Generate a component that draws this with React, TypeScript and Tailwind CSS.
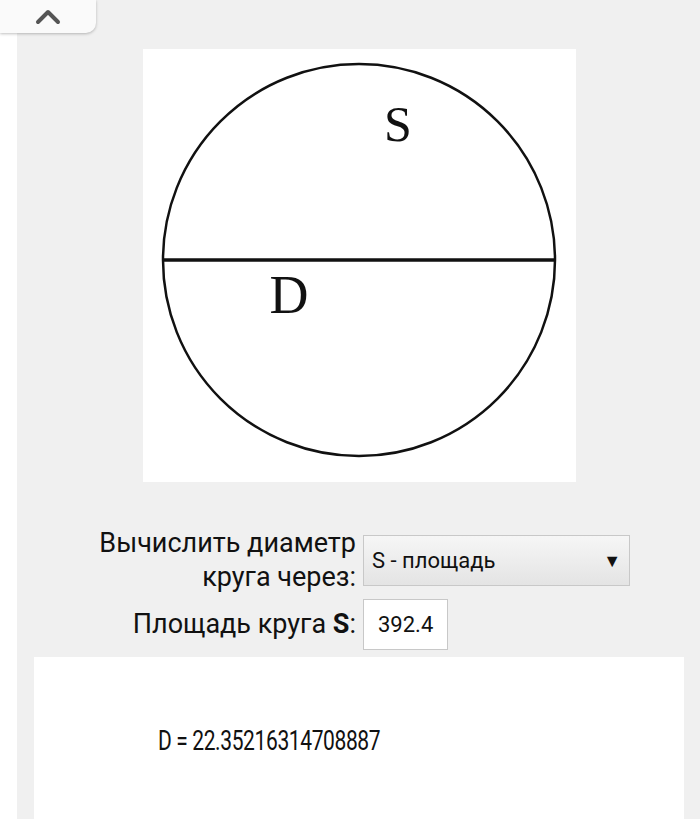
import { ChevronUp } from "lucide-react";

function CircleFigure() {
    return (
        <svg width="433" height="433" viewBox="0 0 433 433" className="block">
            <circle cx="216" cy="211" r="196" fill="none" stroke="#111" strokeWidth="2.5" />
            <line x1="20" y1="211" x2="412" y2="211" stroke="#111" strokeWidth="3.5" />
            <text
                x="255"
                y="92"
                fontFamily="'Liberation Serif', serif"
                fontSize="50"
                fill="#111"
                textAnchor="middle"
            >
                S
            </text>
            <text
                x="146"
                y="264"
                fontFamily="'Liberation Serif', serif"
                fontSize="54"
                fill="#111"
                textAnchor="middle"
            >
                D
            </text>
        </svg>
    );
}

export default function App() {
    return (
        <div className="relative w-[700px] h-[819px] overflow-hidden bg-white font-['Roboto',sans-serif] text-[#111]">
            {/* collapse tab */}
            <div className="absolute left-0 top-0 z-10 flex h-[33px] w-[96px] items-center justify-center rounded-br-[10px] bg-[#fafafa] shadow-[0_1px_3px_rgba(0,0,0,0.25)]">
                <ChevronUp className="h-10 w-10 text-[#555]" strokeWidth={2.4} />
            </div>

            <div className="ml-[17px] h-full bg-[#f0f0f0] pt-[49px]">
                <div className="flex">
                    <div className="ml-[126px] bg-white">
                        <CircleFigure />
                    </div>
                </div>

                <div className="mt-[50px] flex flex-col gap-[8px]">
                    <div className="flex h-[59px] items-start">
                        <div className="-mt-[6px] w-[339px] text-right text-[27px] leading-[34px]">
                            Вычислить диаметр
                            <br />
                            круга через:
                        </div>
                        <div className="ml-[7px] mt-[3px] flex h-[51px] w-[267px] items-center justify-between border border-[#c8c8c8] bg-gradient-to-b from-[#f6f6f6] to-[#e4e4e4] pl-[8px] pr-[8px] text-[22px]">
                            <span>S - площадь</span>
                            <span className="text-[18px]">▼</span>
                        </div>
                    </div>
                    <div className="flex items-center">
                        <div className="w-[339px] text-right text-[27px]">
                            Площадь круга <b>S</b>:
                        </div>
                        <div className="ml-[7px] flex h-[51px] w-[85px] items-center border border-[#c8c8c8] bg-white pl-[14px] text-[22px]">
                            392.4
                        </div>
                    </div>
                </div>

                <div className="ml-[17px] mt-[7px] h-[200px] w-[650px] bg-white pl-[124px] pt-[63px]">
                    <span className="inline-block origin-left scale-x-[0.75] text-[28px] tracking-[-0.5px]">
                        D = 22.35216314708887
                    </span>
                </div>
            </div>
        </div>
    );
}
